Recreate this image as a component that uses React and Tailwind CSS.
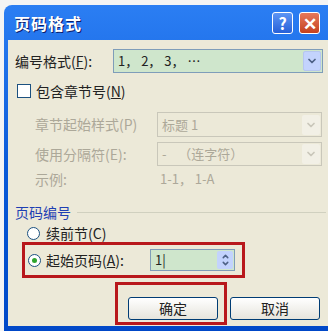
import { ChevronDown, ChevronUp } from 'lucide-react';

const font = { fontFamily: '"Noto Sans CJK SC", "Liberation Sans", sans-serif' };

function Select({ value, disabled, className }) {
  return (
    <div className={`flex items-center border ${disabled ? 'border-[#c9c7ba] bg-[#ece9d8]' : 'border-[#7f9db9] bg-[#cfe6cc]'} ${className}`}>
      <div className={`flex-1 pl-[4px] text-[13px] whitespace-pre ${disabled ? 'text-[#aca899]' : 'text-[#222]'}`}>{value}</div>
      <div className={`w-[18px] h-[20px] mr-[1px] flex items-center justify-center rounded-[2px] ${disabled ? 'bg-[#f2f0e6]' : 'bg-[#c3d3fd] border border-[#b6c6f0]'}`}>
        <ChevronDown size={12} strokeWidth={3.5} color={disabled ? '#c9c7ba' : '#4d6185'} />
      </div>
    </div>
  );
}

export default function App() {
  return (
    <div className="w-[328px] h-[331px] bg-[#f4f4f4] overflow-hidden pt-[5px] pl-[4px]" style={font}>
      <div className="w-[330px] h-[326px] rounded-tl-[8px] bg-gradient-to-b from-[#2b7ef3] via-[#0a5ad9] to-[#0048c8] flex flex-col">
        <div className="h-[35px] shrink-0 flex items-center pl-[10px] pr-[10px]">
          <span className="text-white font-bold text-[16px] tracking-[1px] [text-shadow:1px_1px_0_#0a1e6e]">页码格式</span>
          <div className="ml-auto flex gap-[6px] mr-[4px]">
            <div className="w-[21px] h-[22px] rounded-[3px] border border-white bg-gradient-to-b from-[#5d95f4] to-[#2760d8] flex items-center justify-center text-white font-bold text-[16px] leading-none">?</div>
            <div className="w-[21px] h-[22px] rounded-[3px] border border-white bg-gradient-to-b from-[#e7785a] to-[#c4401d] flex items-center justify-center text-white font-bold text-[17px] leading-none">✕</div>
          </div>
        </div>
        <div className="flex-1 ml-[4px] mb-[5px] bg-[#ece9d8] pl-[7px] pr-[8px] pt-[9px] text-[14px] text-[#222]">
          <div className="flex items-center">
            <span className="w-[98px]">编号格式(<u>F</u>):</span>
            <Select value="1， 2， 3， …" className="w-[210px] h-[24px]" />
          </div>
          <div className="flex items-center mt-[10px] h-[16px]">
            <div className="w-[14px] h-[14px] border border-[#1c5180] bg-white ml-[2px]" />
            <span className="ml-[5px]">包含章节号(<u>N</u>)</span>
          </div>
          <div className="pl-[20px] text-[#aca899]">
            <div className="flex items-center mt-[13px]">
              <span className="w-[122px]">章节起始样式(P)</span>
              <Select value="标题 1" disabled className="w-[165px] h-[25px]" />
            </div>
            <div className="flex items-center mt-[5px]">
              <span className="w-[122px]">使用分隔符(E):</span>
              <Select value="-    （连字符）" disabled className="w-[165px] h-[24px]" />
            </div>
            <div className="flex items-center mt-[3px] h-[20px] text-[13px]">
              <span className="w-[122px] text-[14px]">示例:</span>
              <span className="pl-[3px]">1-1， 1-A</span>
            </div>
          </div>
          <div className="flex items-center mt-[14px] h-[18px]">
            <span className="text-[#1e3fb3] text-[14px]">页码编号</span>
            <div className="flex-1 ml-[6px] h-px bg-[#d0d0bf]" />
          </div>
          <div className="flex items-center mt-[3px] pl-[12px] h-[18px]">
            <div className="w-[13px] h-[13px] rounded-full border border-[#1c5180] bg-white" />
            <span className="ml-[6px]">续前节(C)</span>
          </div>
          <div className="ml-[7px] w-[223px] h-[36px] border-[3px] border-[#b8181c] flex items-center pl-[3px]">
            <div className="w-[13px] h-[13px] rounded-full border border-[#1c5180] bg-white flex items-center justify-center">
              <div className="w-[5px] h-[5px] rounded-full bg-[#2fa52f]" />
            </div>
            <span className="ml-[5px] w-[104px]">起始页码(<u>A</u>):</span>
            <div className="w-[85px] h-[22px] border border-[#7f9db9] bg-[#cfe6cc] flex items-center">
              <span className="pl-[4px] flex-1 text-[13px]">1|</span>
              <div className="w-[16px] h-[18px] mr-[1px] bg-[#c3d3fd] rounded-[2px] flex flex-col items-center justify-center">
                <ChevronUp size={9} strokeWidth={4} color="#4d6185" className="-mb-[2px]" />
                <ChevronDown size={9} strokeWidth={4} color="#4d6185" />
              </div>
            </div>
          </div>
          <div className="flex items-end mt-[4px]">
            <div className="ml-[100px] w-[112px] h-[43px] border-[3px] border-[#b8181c] flex items-end justify-end pb-[2px] pr-[6px]">
              <div className="w-[90px] h-[23px] rounded-[3px] border border-[#003c74] bg-gradient-to-b from-white to-[#e6e4dc] flex items-center justify-center">确定</div>
            </div>
            <div className="ml-[3px] mb-[5px] w-[90px] h-[23px] rounded-[3px] border border-[#003c74] bg-gradient-to-b from-white to-[#e6e4dc] flex items-center justify-center">取消</div>
          </div>
        </div>
      </div>
    </div>
  );
}
